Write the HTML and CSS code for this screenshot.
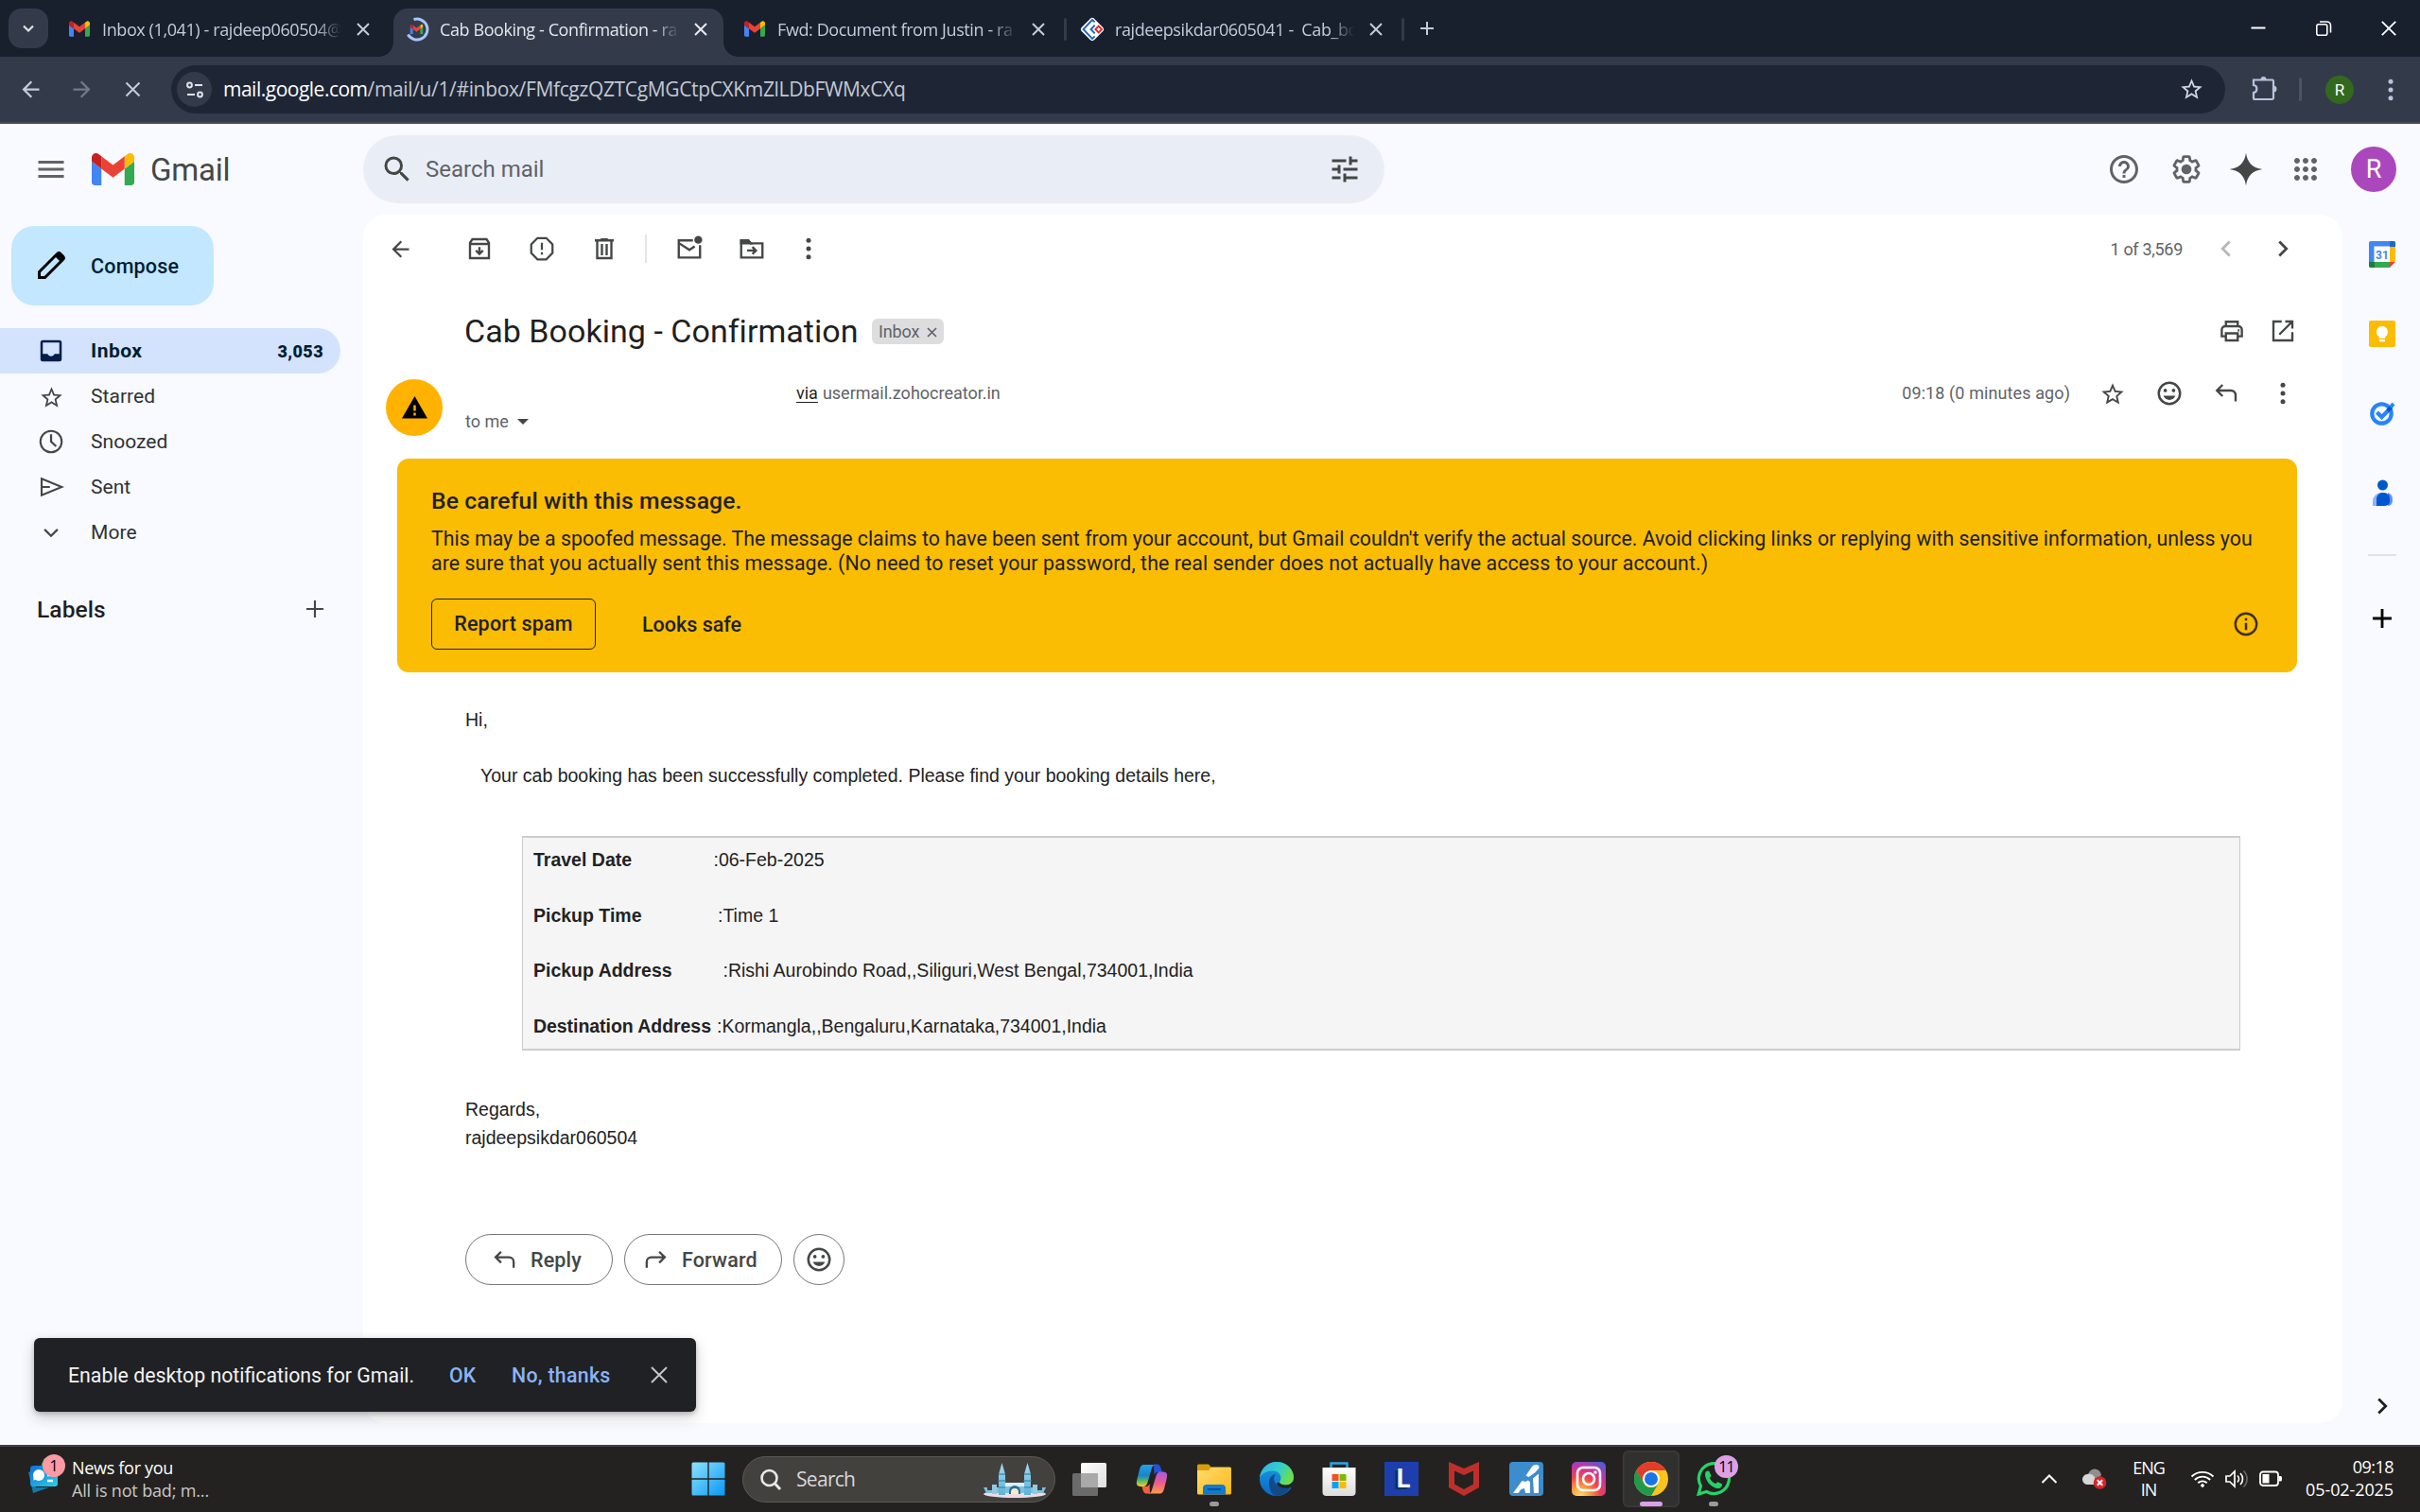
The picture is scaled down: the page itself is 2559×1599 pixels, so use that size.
FILE: index.html
```
<!DOCTYPE html>
<html lang="en">
<head>
<meta charset="utf-8">
<title>Cab Booking - Confirmation</title>
<link rel="stylesheet" href="styles.css">
</head>
<body>
<svg class="defs" aria-hidden="true">
  <defs>
    <symbol id="gmail" viewBox="52 42 88 66"><path fill="#4285f4" d="M58 108h14V74L52 59v43c0 3.32 2.69 6 6 6"/><path fill="#34a853" d="M120 108h14c3.32 0 6-2.69 6-6V59l-20 15"/><path fill="#fbbc04" d="M120 48v26l20-15v-8c0-7.42-8.47-11.65-14.4-7.2"/><path fill="#ea4335" d="M72 74V48l24 18 24-18v26L96 92"/><path fill="#c5221f" d="M52 51v8l20 15V48l-5.6-4.2c-5.94-4.45-14.4-.22-14.4 7.2"/></symbol>
    <symbol id="x" viewBox="0 0 18 18"><path d="M3 3l12 12M15 3L3 15" fill="none" stroke="currentColor" stroke-width="2"/></symbol>
    <symbol id="star" viewBox="0 0 24 24"><path fill="currentColor" d="M22 9.24l-7.19-.62L12 2 9.19 8.63 2 9.24l5.46 4.73L5.82 21 12 17.27 18.18 21l-1.63-7.03L22 9.24zM12 15.4l-3.76 2.27 1-4.28-3.32-2.88 4.38-.38L12 6.1l1.71 4.04 4.38.38-3.32 2.88 1 4.28L12 15.4z"/></symbol>
    <symbol id="dots" viewBox="0 0 24 24"><g fill="currentColor"><circle cx="12" cy="5" r="2"/><circle cx="12" cy="12" r="2"/><circle cx="12" cy="19" r="2"/></g></symbol>
    <symbol id="mood" viewBox="0 0 24 24"><circle cx="12" cy="12" r="9" fill="none" stroke="currentColor" stroke-width="2"/><g fill="currentColor"><circle cx="8.5" cy="9.5" r="1.5"/><circle cx="15.5" cy="9.5" r="1.5"/><path d="M12 17.5c2.33 0 4.31-1.46 5.11-3.5H6.89c.8 2.04 2.78 3.5 5.11 3.5z"/></g></symbol>
    <symbol id="reply" viewBox="0 0 24 24"><path fill="none" stroke="currentColor" stroke-width="1.900" d="M9 4.8L4.2 9.6 9 14.4M4.2 9.6H16a4 4 0 0 1 4 4v5.2"/></symbol>
    <symbol id="back" viewBox="0 0 24 24"><path fill="currentColor" d="M20 11H7.83l5.59-5.59L12 4l-8 8 8 8 1.41-1.41L7.83 13H20v-2z"/></symbol>
    <symbol id="left" viewBox="0 0 24 24"><path fill="none" stroke="currentColor" stroke-width="2.2" d="M15 6l-6 6 6 6"/></symbol>
    <symbol id="plus" viewBox="0 0 24 24"><path fill="none" stroke="currentColor" stroke-width="2" d="M12 5v14M5 12h14"/></symbol>
    <linearGradient id="gWin" x1="0" y1="0" x2="1" y2="1"><stop offset="0" stop-color="#8ce3ff"/><stop offset="1" stop-color="#0a97f5"/></linearGradient>
    <linearGradient id="gCopA" x1="0" y1="0" x2="0" y2="1"><stop offset="0" stop-color="#1fa2f0"/><stop offset=".5" stop-color="#1b83c8"/><stop offset=".75" stop-color="#5dbb5e"/><stop offset="1" stop-color="#ffcb2a"/></linearGradient>
    <linearGradient id="gCopB" x1="0" y1="0" x2="0" y2="1"><stop offset="0" stop-color="#a25ae8"/><stop offset=".5" stop-color="#ee5b8f"/><stop offset="1" stop-color="#ff9a45"/></linearGradient>
    <linearGradient id="gFold" x1="0" y1="0" x2="1" y2="1"><stop offset="0" stop-color="#ffdc72"/><stop offset="1" stop-color="#fdb813"/></linearGradient>
    <linearGradient id="gEdge" x1="0" y1="0" x2="1" y2=".5"><stop offset="0" stop-color="#2bb0ee"/><stop offset=".6" stop-color="#36cfc6"/><stop offset="1" stop-color="#6be04b"/></linearGradient>
    <linearGradient id="gEdgeB" x1="0" y1="0" x2="0" y2="1"><stop offset="0" stop-color="#1b9be0"/><stop offset="1" stop-color="#0a68c8"/></linearGradient>
    <linearGradient id="gStore" x1="0" y1="0" x2="0" y2="1"><stop offset="0" stop-color="#fff"/><stop offset="1" stop-color="#dcdcdc"/></linearGradient>
    <radialGradient id="gInsta" cx=".25" cy="1" r="1.15"><stop offset="0" stop-color="#ffdf6d"/><stop offset=".25" stop-color="#fd9a3c"/><stop offset=".5" stop-color="#f0434f"/><stop offset=".75" stop-color="#c633a5"/><stop offset="1" stop-color="#4d5fd6"/></radialGradient>
    <linearGradient id="gNews" x1="0" y1="0" x2="1" y2="1"><stop offset="0" stop-color="#0f6fdc"/><stop offset="1" stop-color="#2bd0e4"/></linearGradient>
    <linearGradient id="gTv" x1="0" y1="0" x2="1" y2="1"><stop offset="0" stop-color="#fff"/><stop offset="1" stop-color="#dedede"/></linearGradient>
    <linearGradient id="gCastle" x1="0" y1="0" x2="0" y2="1"><stop offset="0" stop-color="#a9d8ee"/><stop offset="1" stop-color="#5fb3d6"/></linearGradient>
  </defs>
</svg>

<div class="screen">
  <header class="tabstrip">
    <span class="tab-menu"><svg width="18" height="18" viewBox="0 0 18 18"><path d="M4 6.5l5 5 5-5" fill="none" stroke="#dfe3ea" stroke-width="2.2"/></svg></span>
    <div class="tab"><span class="fav"><svg width="22" height="17"><use href="#gmail"/></svg></span><span class="tab-title">Inbox (1,041) - rajdeep060504@</span><svg class="tab-x" width="18" height="18"><use href="#x"/></svg></div>
    <div class="tab active"><span class="fav"><svg width="26" height="26" viewBox="0 0 26 26"><path d="M9.5 2.6A11 11 0 1 1 3.4 18.6" fill="none" stroke="#a8c7fa" stroke-width="3"/><use href="#gmail" x="5.5" y="7.5" width="14" height="11"/></svg></span><span class="tab-title">Cab Booking - Confirmation - ra</span><svg class="tab-x" width="18" height="18"><use href="#x"/></svg></div>
    <div class="tab"><span class="fav"><svg width="22" height="17"><use href="#gmail"/></svg></span><span class="tab-title">Fwd: Document from Justin - ra</span><svg class="tab-x" width="18" height="18"><use href="#x"/></svg></div>
    <i class="tab-sep"></i>
    <div class="tab"><span class="fav"><svg width="26" height="26" viewBox="0 0 24 24"><rect x="3.300" y="3.300" width="17.400" height="17.400" rx="3" transform="rotate(45 12 12)" fill="#fff"/><path d="M14.500 4.800L12 2.900 3.300 12l8.700 9.100 2.500-2.300M14.500 8L10.700 12l3.800 4" fill="none" stroke="#1c69b5" stroke-width="1.800"/><rect x="16" y="9.800" width="4.400" height="4.400" transform="rotate(45 18.200 12)" fill="#fff" stroke="#e42527" stroke-width="1.700"/></svg></span><span class="tab-title">rajdeepsikdar0605041 -&nbsp; Cab_bo</span><svg class="tab-x" width="18" height="18"><use href="#x"/></svg></div>
    <i class="tab-sep"></i>
    <svg class="new-tab" width="24" height="24"><use href="#plus"/></svg>
    <div class="win-controls">
      <svg width="18" height="18" viewBox="0 0 18 18"><path d="M1.5 8.5h15" stroke="#fff" stroke-width="2"/></svg>
      <svg width="18" height="18" viewBox="0 0 18 18" fill="none" stroke="#fff" stroke-width="1.6"><rect x="1.8" y="4.8" width="11" height="11.4" rx="2"/><path d="M5 2h7.500a4 4 0 0 1 4 4v7.500"/></svg>
      <svg width="18" height="18" viewBox="0 0 18 18"><path d="M1.800 1.800l14.400 14.400M16.200 1.800L1.800 16.200" stroke="#fff" stroke-width="1.800"/></svg>
    </div>
  </header>

  <div class="toolbar">
    <svg class="nav" width="27" height="27"><use href="#back"/></svg>
    <svg class="nav dim flip" width="27" height="27"><use href="#back"/></svg>
    <svg class="nav" width="27" height="27" viewBox="0 0 27 27"><path d="M6.500 6.500l14 14M20.500 6.500l-14 14" fill="none" stroke="currentColor" stroke-width="2"/></svg>
    <div class="omnibox">
      <span class="site-info"><svg width="20" height="20" viewBox="0 0 20 20" fill="none" stroke="#dfe3ea" stroke-width="2"><circle cx="4.500" cy="5" r="2.400"/><path d="M10 5h8M2 15h8"/><circle cx="15.500" cy="15" r="2.400"/></svg></span>
      <span class="url"><span class="host">mail.google.com</span><span class="path">/mail/u/1/#inbox/FMfcgzQZTCgMGCtpCXKmZlLDbFWMxCXq</span></span>
      <svg class="bookmark" width="27" height="27"><use href="#star"/></svg>
    </div>
    <svg class="puzzle" width="30" height="30" viewBox="0 0 30 30"><path d="M4 6.500h20a1.500 1.500 0 0 1 1 1.500v17.500a1.500 1.500 0 0 1-1.500 1.500H5.500A1.500 1.500 0 0 1 4 25.500V20c4.500-.5 4.500-7.500 0-8z" fill="none" stroke="#b9c4dc" stroke-width="2.200"/><path d="M11.500 6a3 3 0 0 1 6 0zM25 12.500a3.200 3.200 0 0 1 0 7z" fill="#b9c4dc"/></svg>
    <i class="tool-sep"></i>
    <span class="profile">R</span>
    <svg class="kebab" width="30" height="30"><use href="#dots"/></svg>
  </div>

  <div class="gmail">
    <div class="ghead">
      <svg class="burger" width="36" height="36" viewBox="0 0 24 24"><path fill="#5f6368" d="M3 18h18v-2H3v2zm0-5h18v-2H3v2zm0-7v2h18V6H3z"/></svg>
      <svg class="logo" width="45" height="34"><use href="#gmail"/></svg>
      <span class="brand">Gmail</span>
      <div class="search">
        <svg width="36" height="36" viewBox="0 0 24 24"><path fill="#444746" d="M15.500 14h-.79l-.28-.27A6.471 6.471 0 0 0 16 9.500 6.500 6.500 0 1 0 9.500 16c1.610 0 3.090-.59 4.230-1.570l.27.28v.79l5 4.990L20.490 19l-4.990-5zm-6 0C7.010 14 5 11.990 5 9.500S7.010 5 9.500 5 14 7.010 14 9.500 11.990 14 9.500 14z"/></svg>
        <span class="search-text">Search mail</span>
        <svg class="tune" width="36" height="36" viewBox="0 0 24 24"><path fill="#444746" d="M3 17v2h6v-2H3zM3 5v2h10V5H3zm10 16v-2h8v-2h-8v-2h-2v6h2zM7 9v2H3v2h4v2h2V9H7zm14 4v-2H11v2h10zm-6-4h2V7h4V5h-4V3h-2v6z"/></svg>
      </div>
      <div class="ghead-right">
        <svg width="36" height="36" viewBox="0 0 24 24"><path fill="#5f6368" d="M11 18h2v-2h-2v2zm1-16C6.480 2 2 6.480 2 12s4.480 10 10 10 10-4.480 10-10S17.520 2 12 2zm0 18c-4.410 0-8-3.590-8-8s3.590-8 8-8 8 3.590 8 8-3.590 8-8 8zm0-14c-2.210 0-4 1.790-4 4h2c0-1.100.9-2 2-2s2 .9 2 2c0 2-3 1.750-3 5h2c0-2.250 3-2.500 3-5 0-2.210-1.790-4-4-4z"/></svg>
        <svg class="gear" width="36" height="36" viewBox="0 0 24 24"><g transform="translate(1.300 1.300) scale(.892)"><path fill="none" stroke="#5f6368" stroke-width="2.100" d="M19.430 12.980c.04-.32.07-.64.07-.98 0-.34-.03-.66-.07-.98l2.110-1.650c.19-.15.24-.42.12-.64l-2-3.460c-.09-.16-.26-.25-.44-.25-.06 0-.12.01-.17.03l-2.490 1c-.52-.4-1.080-.73-1.690-.98l-.38-2.650C14.460 2.180 14.250 2 14 2h-4c-.25 0-.46.18-.49.42l-.38 2.650c-.61.25-1.170.59-1.690.98l-2.490-1c-.06-.02-.12-.03-.18-.03-.17 0-.34.09-.43.25l-2 3.460c-.13.22-.07.49.12.64l2.110 1.650c-.04.32-.07.65-.07.98s.03.66.07.98l-2.110 1.650c-.19.15-.24.42-.12.64l2 3.460c.09.16.26.25.44.25.06 0 .12-.01.17-.03l2.490-1c.52.4 1.080.73 1.690.98l.38 2.650c.03.24.24.42.49.42h4c.25 0 .46-.18.49-.42l.38-2.650c.61-.25 1.170-.59 1.690-.98l2.490 1c.06.02.12.03.18.03.17 0 .34-.09.43-.25l2-3.460c.12-.22.07-.49-.12-.64l-2.110-1.650z"/><circle cx="12" cy="12" r="4" fill="#5f6368"/></g></svg>
        <svg class="spark" width="36" height="36" viewBox="0 0 36 36"><path fill="#444746" d="M18 .5C19.300 11 25 16.700 35.500 18 25 19.300 19.300 25 18 35.500 16.700 25 11 19.300.5 18 11 16.700 16.700 11 18 .5z"/></svg>
        <svg width="36" height="36" viewBox="0 0 24 24"><path fill="#5f6368" d="M6 8c1.100 0 2-.9 2-2s-.9-2-2-2-2 .9-2 2 .9 2 2 2zm6 12c1.100 0 2-.9 2-2s-.9-2-2-2-2 .9-2 2 .9 2 2 2zm-6 0c1.100 0 2-.9 2-2s-.9-2-2-2-2 .9-2 2 .9 2 2 2zm0-6c1.100 0 2-.9 2-2s-.9-2-2-2-2 .9-2 2 .9 2 2 2zm6 0c1.100 0 2-.9 2-2s-.9-2-2-2-2 .9-2 2 .9 2 2 2zm4-8c0 1.100.9 2 2 2s2-.9 2-2-.9-2-2-2-2 .9-2 2zm-4 2c1.100 0 2-.9 2-2s-.9-2-2-2-2 .9-2 2 .9 2 2 2zm6 6c1.100 0 2-.9 2-2s-.9-2-2-2-2 .9-2 2 .9 2 2 2zm0 6c1.100 0 2-.9 2-2s-.9-2-2-2-2 .9-2 2 .9 2 2 2z"/></svg>
        <span class="account">R</span>
      </div>
    </div>

    <div class="gbody">
      <nav class="side">
        <div class="compose"><svg width="36" height="36" viewBox="0 0 36 36"><path d="M5.500 30.500v-6L24.500 5.500a2.500 2.500 0 0 1 3.500 0l2.500 2.500a2.500 2.500 0 0 1 0 3.500L11.500 30.500z" fill="none" stroke="#000" stroke-width="3"/><path d="M22 8l6-3.500 4 4L28 14z" fill="#000"/></svg><span>Compose</span></div>
        <div class="folder sel"><svg width="30" height="30" viewBox="0 0 24 24"><path fill="#041e49" fill-rule="evenodd" d="M5 3h14a2 2 0 0 1 2 2v14a2 2 0 0 1-2 2H5a2 2 0 0 1-2-2V5a2 2 0 0 1 2-2zm0 2v9.500h4c.6 1.200 1.700 2 3 2s2.400-.8 3-2h4V5z"/></svg><span>Inbox</span><b>3,053</b></div>
        <div class="folder"><svg width="27" height="27" class="f27"><use href="#star"/></svg><span>Starred</span></div>
        <div class="folder"><svg width="30" height="30" viewBox="0 0 24 24" fill="none" stroke="#444746"><circle cx="12" cy="12" r="9" stroke-width="1.700"/><path d="M12 5.800V12l4.300 4" stroke-width="1.800"/></svg><span>Snoozed</span></div>
        <div class="folder"><svg width="30" height="30" viewBox="0 0 24 24"><path fill="none" stroke="#444746" stroke-width="1.700" d="M4 5l17 7-17 7zM4 12h7"/></svg><span>Sent</span></div>
        <div class="folder"><svg width="30" height="30" viewBox="0 0 24 24"><path fill="none" stroke="#444746" stroke-width="1.800" d="M6.500 9.500L12 15l5.500-5.500"/></svg><span>More</span></div>
        <div class="labels"><span>Labels</span><svg width="30" height="30" viewBox="0 0 24 24"><path stroke="#444746" stroke-width="1.700" d="M12 4.800v14.400M4.800 12h14.400"/></svg></div>
      </nav>

      <main class="card">
        <div class="actions">
          <svg class="a-back" width="27" height="27"><use href="#back"/></svg>
          <svg width="30" height="30" viewBox="0 0 24 24" fill="none" stroke="currentColor" stroke-width="1.900"><path d="M4 7l2-3h12l2 3v13H4zM4 8h16M12 10.500V16M9 13.500l3 3 3-3"/></svg>
          <svg class="m36" width="30" height="30" viewBox="0 0 24 24" fill="none" stroke="currentColor" stroke-width="1.800"><path d="M8.300 3h7.400L21 8.300v7.400L15.700 21H8.300L3 15.700V8.300zM12 7v6M12 15v2"/></svg>
          <svg class="m36" width="30" height="30" viewBox="0 0 24 24" fill="none" stroke="currentColor" stroke-width="1.900"><path d="M4 5h16M9 4.200h6M6 5v15h12V5M10 8v9.500M14 8v9.500"/></svg>
          <i class="a-sep"></i>
          <svg width="30" height="30" viewBox="0 0 24 24" fill="none" stroke="currentColor" stroke-width="1.900"><path d="M15 5H3v14.500h18V9M3.500 7.500L12 13l4.500-3"/><circle cx="19.500" cy="4.500" r="2.400" fill="currentColor"/></svg>
          <svg class="m36" width="30" height="30" viewBox="0 0 24 24" fill="none" stroke="currentColor" stroke-width="1.900"><path d="M3 19.500V5h6l2 2.500h10v12zM8 13.500h7M12.500 10.500l3 3-3 3"/><path d="M3 5h6l2 2.500H3z" fill="currentColor"/></svg>
          <svg class="a-dots" width="30" height="30"><use href="#dots"/></svg>
          <span class="pager">1 of 3,569</span>
          <svg class="p-left" width="30" height="30"><use href="#left"/></svg>
          <svg class="p-right flip" width="30" height="30"><use href="#left"/></svg>
        </div>

        <div class="subject">
          <h1>Cab Booking - Confirmation</h1>
          <span class="chip"><span>Inbox</span><svg width="11" height="11" viewBox="0 0 11 11"><path d="M1 1l9 9M10 1L1 10" stroke="#5f6368" stroke-width="1.700"/></svg></span>
          <svg class="print" width="30" height="30" viewBox="0 0 24 24" fill="none" stroke="currentColor" stroke-width="1.900"><path d="M7 8V4.200h10V8M7 16.500H3.500V11a3 3 0 0 1 3-3h11a3 3 0 0 1 3 3v5.500H17M7 14h10v6H7z"/><path d="M17 11.500h1.500"/></svg>
          <svg width="30" height="30" viewBox="0 0 24 24" fill="none" stroke="currentColor" stroke-width="1.900"><path d="M11 4H4v16h16v-7M14 4h6v6M20 4L9 15"/></svg>
        </div>

        <div class="meta">
          <span class="warn-avatar"><svg width="27" height="24" viewBox="0 0 27 24"><path d="M13.500 0L27 23.500H0z" fill="#000"/><path d="M13.500 9.500v6M13.500 17.500v3" stroke="#ffb300" stroke-width="2.400"/></svg></span>
          <div class="who">
            <div class="via"><u>via</u><span>usermail.zohocreator.in</span></div>
            <div class="tome"><span>to me</span><svg width="12" height="6" viewBox="0 0 12 6"><path d="M0 0h12L6 6z" fill="#444746"/></svg></div>
          </div>
          <div class="meta-right">
            <span class="time">09:18 (0 minutes ago)</span>
            <svg class="m-star" width="28" height="28"><use href="#star"/></svg>
            <svg class="m-ic" width="30" height="30"><use href="#mood"/></svg>
            <svg class="m-ic" width="30" height="30"><use href="#reply"/></svg>
            <svg class="m-ic" width="30" height="30"><use href="#dots"/></svg>
          </div>
        </div>

        <section class="warning">
          <h2>Be careful with this message.</h2>
          <p><span class="l1">This may be a spoofed message. The message claims to have been sent from your account, but Gmail couldn't verify the actual source. Avoid clicking links or replying with sensitive information, unless you</span><br><span class="l2">are sure that you actually sent this message. (No need to reset your password, the real sender does not actually have access to your account.)</span></p>
          <div class="warn-actions">
            <span class="btn-out">Report spam</span><span class="btn-txt">Looks safe</span>
            <svg class="info" width="30" height="30" viewBox="0 0 24 24"><circle cx="12" cy="12" r="9" fill="none" stroke="#3b2f0a" stroke-width="1.900"/><path d="M12 11v6M12 7v2" stroke="#3b2f0a" stroke-width="2"/></svg>
          </div>
        </section>

        <article class="mail">
          <p>Hi,</p>
          <p class="intro">Your cab booking has been successfully completed. Please find your booking details here,</p>
          <div class="booking">
            <div><b class="k1">Travel Date</b>:06-Feb-2025</div>
            <div><b class="k2">Pickup Time</b>:Time 1</div>
            <div><b class="k3">Pickup Address</b>:Rishi Aurobindo Road,,Siliguri,West Bengal,734001,India</div>
            <div><b class="k4">Destination Address</b>:Kormangla,,Bengaluru,Karnataka,734001,India</div>
          </div>
          <p>Regards,<br>rajdeepsikdar060504</p>
        </article>

        <div class="replybar">
          <span class="pill reply"><svg width="29" height="29"><use href="#reply"/></svg><span>Reply</span></span>
          <span class="pill fwd"><svg class="flip" width="29" height="29"><use href="#reply"/></svg><span>Forward</span></span>
          <span class="pill round"><svg width="30" height="30"><use href="#mood"/></svg></span>
        </div>
      </main>

      <aside class="addons">
        <svg width="28" height="28" viewBox="0 0 28 28"><rect width="28" height="28" rx="2" fill="#4285f4"/><path d="M22 0h4a2 2 0 0 1 2 2v4h-6z" fill="#1967d2"/><path d="M22 6h6v16h-6z" fill="#fbbc04"/><path d="M6 22h16v6H6z" fill="#34a853"/><path d="M0 22h6v6H2a2 2 0 0 1-2-2z" fill="#188038"/><path d="M22 22h6l-6 6z" fill="#ea4335"/><path d="M28 22v6h-6z" fill="#f8fafd"/><rect x="5.500" y="5.500" width="16.500" height="16.500" fill="#fff"/><text x="14" y="18.500" text-anchor="middle" class="cal-day">31</text></svg>
        <svg width="28" height="28" viewBox="0 0 28 28"><rect width="28" height="28" rx="2" fill="#fbbc04"/><path d="M14 6a6 6 0 0 0-3.300 11v1.800h6.600V17A6 6 0 0 0 14 6zM11 20h6v2.200h-6z" fill="#fff"/></svg>
        <svg width="28" height="28" viewBox="0 0 28 28"><circle cx="13.500" cy="14.500" r="10.200" fill="none" stroke="#2684fc" stroke-width="4.200"/><path d="M7 14.500l3-3 3.500 3.500L22.500 6l3 3L13.500 21z" fill="#2684fc"/><path d="M18.500 10l6-7.500 3 3-6.500 7z" fill="#2684fc"/><path d="M18.500 10l3-3.500 3 3-3.500 3.200z" fill="#0057cc"/></svg>
        <svg width="28" height="28" viewBox="0 0 28 28"><path d="M4 28v-5a9 9 0 0 1 9-9v14z" fill="#8ab4ff"/><path d="M20 14a8 8 0 0 1 5 8c0 3-2 6-5 6z" fill="#5c8dff"/><path d="M8 28v-8a6.500 6.500 0 0 1 6-6h2a6 6 0 0 1 6 6v3a5 5 0 0 1-5 5z" fill="#0057cc"/><circle cx="14.500" cy="6" r="5.500" fill="#0057cc"/></svg>
        <i class="side-sep"></i>
        <svg class="add" width="34" height="34"><use href="#plus"/></svg>
        <svg class="flip collapse" width="30" height="30"><use href="#left"/></svg>
      </aside>
    </div>
  </div>

  <footer class="taskbar">
    <div class="news">
      <span class="news-ic"><svg width="36" height="38" viewBox="0 0 36 38"><path d="M15 6l3-6h10v12H14z" fill="#3fa65a"/><path d="M1 15l4-2 4 18 14 0-17 6z" fill="#137aa8"/><rect x="3" y="8" width="29" height="22" rx="3" fill="url(#gNews)"/><circle cx="12" cy="18" r="6" fill="#fff"/><path d="M6.500 24v-5h5z" fill="#fff"/><path d="M21 18h9M21 24h6" stroke="#fff" stroke-width="2.400"/></svg><em>1</em></span>
      <div class="news-text"><span class="n1">News for you</span><span class="n2">All is not bad; m...</span></div>
    </div>
    <div class="apps">
      <span class="app"><svg width="36" height="36" viewBox="0 0 36 36"><path fill="url(#gWin)" d="M2 .5h15.300v16.800H.5V2A1.500 1.500 0 0 1 2 .5zM18.700.5H34A1.500 1.500 0 0 1 35.500 2v15.300H18.700zM.5 18.700h16.800v16.800H2A1.500 1.500 0 0 1 .5 34zM18.700 18.700h16.800V34a1.500 1.500 0 0 1-1.500 1.500H18.700z"/></svg></span>
      <div class="tsearch">
        <svg width="24" height="24" viewBox="0 0 24 24" fill="none" stroke="#e8e8e8"><circle cx="10.500" cy="10" r="8" stroke-width="2.600"/><path d="M16.500 16l5.500 6" stroke-width="3"/></svg>
        <span>Search</span>
        <svg class="castle" width="68" height="38" viewBox="0 0 68 38"><ellipse cx="34" cy="34" rx="33" ry="4" fill="#eedbe4"/><path d="M1 27h4v3h5v-3h14v-5h20v5h14v3h5v-3h4l-3 6H4z" fill="#7fc0dc"/><path d="M17 35V13l3.500-12L24 13v22zM44 35V13l3.500-12L51 13v22z" fill="url(#gCastle)"/><path d="M24 22h20v4H24z" fill="#d9eefa"/><path d="M17 13h7M16.500 20h8M44 13h7M43.500 20h8M17 27h7M44 27h7" stroke="#3f93bb" stroke-width="1.500"/><path d="M28 34v-3a6 6 0 0 1 12 0v3z" fill="#2e6f92"/><path d="M30 34v-2a4 4 0 0 1 8 0v2z" fill="#f6ead0"/><path d="M10 24h5v10h-5zM53 24h5v10h-5z" fill="#8fcbe3"/></svg>
      </div>
      <span class="app"><svg width="36" height="36" viewBox="0 0 36 36"><rect x="0" y="12" width="27" height="24" rx="1.500" fill="#6b6b6b"/><rect x="9" y="1" width="27" height="26" rx="1.500" fill="url(#gTv)"/><path d="M9 12h18v15H9z" fill="#a9a9a9"/></svg></span>
      <span class="app"><svg width="36" height="36" viewBox="0 0 36 36"><path d="M20 2.500h3.500c3 0 3.600 2.500 4.500 5.500l1 3h-5c-2 0-3 1.500-3.500 3z" fill="#2453d8"/><path d="M10 3h12c-3 0-3.800 3-4.700 6l-3.600 12c-1 3.500-2 5-5 5H6c-5 0-4.500-4-3.500-8L5 8c1-3.500 2-5 5-5z" fill="url(#gCopA)"/><path d="M16 33.500h-3.500c-3 0-3.600-2.500-4.500-5.500l-.6-2h4.600c2 0 3-1.500 3.500-3z" fill="#f2603e"/><path d="M26 33.500H14c3 0 3.800-3 4.700-6l3.600-12c1-3.500 2-5 5-5H30c5 0 4.500 4 3.500 8l-2.500 10c-1 3.500-2 5-5 5z" fill="url(#gCopB)"/></svg></span>
      <span class="app run"><svg width="36" height="36" viewBox="0 0 36 36"><path d="M0 4a1.500 1.500 0 0 1 1.500-1.500H12L15 6v5H0z" fill="#dd9d0b"/><path d="M0 9h12l3-3.500h19.500A1.500 1.500 0 0 1 36 7v26a1.500 1.500 0 0 1-1.500 1.500h-33A1.500 1.500 0 0 1 0 33z" fill="url(#gFold)"/><path d="M6 34.500V28a4 4 0 0 1 4-4h16a4 4 0 0 1 4 4v6.500z" fill="#0f7bd0"/><path d="M11 29h14" stroke="#0a4f95" stroke-width="2"/></svg><i class="dot"></i></span>
      <span class="app"><svg width="36" height="36" viewBox="0 0 36 36"><circle cx="18" cy="18" r="18" fill="url(#gEdgeB)"/><path d="M0 17C1 7 9 0 18 0c10 0 18 7.500 18 16 0 5-4 8.500-8.500 8.500-4 0-6.500-1.500-6.500-3 0-1 1.500-2 1.500-4.500C22.500 13 19 9.500 14 9.500 7 9.500 1.500 13 0 17z" fill="url(#gEdge)"/><path d="M10 22c0-4 2-8 7-9-2 2.500-2.500 5.500-1 8.500 2.500 5 9.500 7 17 4.500-3 6.500-9 10-15 10-5 0-8-7-8-14z" fill="#114a8b"/><path d="M20.500 21.500c1 2 4 3 7 3 4 0 7-2 8.500-5v8l-3.500-.5c-6 2-12 .5-15-4z" fill="#242321"/></svg></span>
      <span class="app"><svg width="36" height="38" viewBox="0 0 36 38"><path d="M9.500 8V2.500h17V8" fill="none" stroke="#2aa7ea" stroke-width="2.400"/><path d="M.5 7h35v26a4 4 0 0 1-4 4h-27a4 4 0 0 1-4-4z" fill="url(#gStore)"/><path d="M10.500 14h7v7h-7z" fill="#f25022"/><path d="M18.500 14h7v7h-7z" fill="#7fba00"/><path d="M10.500 22h7v7h-7z" fill="#00a4ef"/><path d="M18.500 22h7v7h-7z" fill="#ffb900"/></svg></span>
      <span class="app"><span class="l-app">L</span></span>
      <span class="app"><svg width="32" height="36" viewBox="0 0 32 36"><path d="M0 0l16 7L32 0v27l-16 9-16-9zM6 9.500v14L16 29l10-5.500v-14L16 14z" fill="#be2f2c" fill-rule="evenodd"/></svg></span>
      <span class="app"><svg width="36" height="36" viewBox="0 0 36 36"><rect width="36" height="36" rx="4" fill="#3d8ccc"/><path d="M4 33L13.500 20l3.500 1 3-1.500 2 2V33h-5l-1-5-3.500 1-3 4zM17.500 14.500L24 5c2-3 8.500-3 7.500 1.500L27 11.500 20.500 16zM25 17.500l6-5V33h-5z" fill="#fff"/></svg></span>
      <span class="app"><svg width="36" height="36" viewBox="0 0 36 36"><rect width="36" height="36" rx="5" fill="url(#gInsta)"/><g fill="none" stroke="#fff" stroke-width="2.600"><rect x="6" y="6" width="24" height="24" rx="6"/><circle cx="18" cy="18" r="6"/></g><circle cx="25" cy="11" r="1.700" fill="#fff"/></svg></span>
      <span class="app cur"><svg width="36" height="36" viewBox="0 0 36 36"><circle cx="18" cy="18" r="18" fill="#fcc31e"/><path d="M2.400 9A18 18 0 0 0 18 36l7.800-13.500A9 9 0 0 1 10.200 22.500z" fill="#229a49"/><path d="M18 9h15.600A18 18 0 0 0 2.400 9l7.800 13.500A9 9 0 0 1 18 9z" fill="#e33b2e"/><path d="M2.400 9A18 18 0 0 0 3 28l8-4-.8-1.500z" fill="#229a49"/><circle cx="18" cy="18" r="8.800" fill="#fff"/><circle cx="18" cy="18" r="7" fill="#1a73e8"/></svg><i class="bar"></i></span>
      <span class="app run"><svg width="36" height="36" viewBox="0 0 36 36"><path d="M2.200 34l2.300-8.500A16 16 0 1 1 10.500 31.500z" fill="none" stroke="#25d366" stroke-width="3.200"/><path d="M9.500 11c1-1.800 3.500-2 4.200-.5l1.600 3.700c.4 1-1.700 2.500-1.300 3.300 1.500 2.500 3.200 4.200 6 5.500.8.300 2-2 3-1.600l3.700 1.800c1 .6 0 3.300-1.700 4.200-3 1.600-7.500-.2-11-3.600S8 14 9.500 11z" fill="#25d366"/></svg><em>11</em><i class="dot"></i></span>
    </div>
    <div class="tray">
      <svg class="t-up" width="18" height="18" viewBox="0 0 18 18"><path d="M1.500 13L9 5.500l7.500 7.500" fill="none" stroke="#fff" stroke-width="2"/></svg>
      <svg class="t-cloud" width="26" height="22" viewBox="0 0 26 22"><path d="M6 8a7 7 0 0 1 14-1l-8 9H5z" fill="#8f8f8f"/><path d="M6 17a5.500 5.500 0 0 1-1-11c3-1 6 0 8 3v8z" fill="#d6d6d6"/><circle cx="18.500" cy="15" r="6.800" fill="#d8232a"/><path d="M15.800 12.300l5.400 5.400M21.200 12.300l-5.400 5.400" stroke="#fff" stroke-width="2"/></svg>
      <div class="lang"><span>ENG</span><span>IN</span></div>
      <svg class="t-wifi" width="26" height="20" viewBox="0 0 26 20" fill="none" stroke="#fff" stroke-width="1.900"><path d="M1.500 7.500a16.500 16.500 0 0 1 23 0M4.800 11a11.700 11.700 0 0 1 16.400 0M8.300 14.300a6.700 6.700 0 0 1 9.400 0"/><circle cx="13" cy="17" r="1.400" fill="#fff" stroke-width="1"/></svg>
      <svg class="t-vol" width="28" height="20" viewBox="0 0 28 20" fill="none" stroke="#fff" stroke-width="1.700"><path d="M2 7h4l5-5v16l-5-5H2z"/><path d="M14 6.500a5 5 0 0 1 0 7M17 4a8.500 8.500 0 0 1 0 12"/><path d="M20.500 1.500a12 12 0 0 1 0 17" stroke="#666"/></svg>
      <svg class="t-bat" width="26" height="18" viewBox="0 0 26 18"><rect x="2" y="1.500" width="19" height="14.500" rx="3" fill="none" stroke="#fff" stroke-width="1.800"/><rect x="4.500" y="4" width="7" height="9.500" fill="#fff"/><path d="M22 6h1.500a1.500 1.500 0 0 1 1.500 1.500v2.500a1.500 1.500 0 0 1-1.500 1.500H22z" fill="#fff"/></svg>
      <div class="clock"><span class="hm">09:18</span><span>05-02-2025</span></div>
    </div>
  </footer>

  <div class="toast">
    <span class="msg">Enable desktop notifications for Gmail.</span><a class="ok">OK</a><a class="no">No, thanks</a>
    <svg width="20" height="20" viewBox="0 0 20 20"><path d="M2 2l16 16M18 2L2 18" stroke="#c4c7c5" stroke-width="2"/></svg>
  </div>
</div>
</body>
</html>
```
FILE: styles.css
```
* { box-sizing: border-box; }
html, body { margin: 0; height: 100%; overflow: hidden; }
body { font-family: Roboto, "Liberation Sans", sans-serif; color: #202124; }
svg { display: block; flex: none; }
.defs { position: absolute; width: 0; height: 0; }
h1, h2, p { margin: 0; font-weight: 400; }
em, i { font-style: normal; }
span, b, a { white-space: nowrap; }
.flip { transform: scaleX(-1); }
.screen { position: relative; width: 2559px; height: 1599px; display: flex; flex-direction: column; }

/* tab strip */
.tabstrip, .toolbar, .taskbar { font-family: "Open Sans", "Noto Sans", sans-serif; }
.tabstrip { height: 60px; background: #18202e; display: flex; padding-left: 9px; color: #c3cbdc; }
.tab-menu { width: 42px; height: 42px; margin: 9px 8px 0 0; border-radius: 14px; background: #333b4b; display: grid; place-items: center; }
.tab { position: relative; width: 349px; height: 51px; margin: 9px 8px 0 0; padding: 0 15px 8px 11px; display: flex; align-items: center; border-radius: 15px 15px 0 0; }
.fav { width: 28px; height: 26px; display: grid; place-items: center; margin-right: 10px; }
.tab-title { width: 253px; font-size: 18px; letter-spacing: -.4px; line-height: 28px; padding-top: 1px; -webkit-mask-image: linear-gradient(90deg, #000 226px, transparent 253px); mask-image: linear-gradient(90deg, #000 226px, transparent 253px); }
.tab-x { margin-left: 14px; color: #c3cbdc; }
.active { background: #333b4b; color: #e4e7ee; }
.active .tab-x { color: #e8eaf0; }
.active::before, .active::after { content: ""; position: absolute; bottom: 0; width: 15px; height: 15px; }
.active::before { left: -15px; background: radial-gradient(circle at 0 0, #18202e 14.5px, #333b4b 15px); }
.active::after { right: -15px; background: radial-gradient(circle at 100% 0, #18202e 14.5px, #333b4b 15px); }
.tab-sep { width: 3px; height: 24px; margin: 19px 5px 0 -5px; background: #333b4b; border-radius: 2px; }
.tab-sep + .tab { margin-left: -3px; }
.new-tab { margin: 18px 0 0 7px; color: #c3cbdc; }
.win-controls { margin: 21px 24px 0 auto; display: flex; gap: 51px; }

/* address bar */
.toolbar { height: 71px; background: #333b4b; border-bottom: 2px solid #454c5b; display: flex; align-items: flex-start; padding: 9px 16px 0 19px; }
.nav { margin: 12px 27px 0 0; color: #c3cbdc; }
.nav.dim { color: #727988; }
.omnibox { width: 2172px; height: 51px; background: #1e2636; border-radius: 26px; display: flex; align-items: center; padding-left: 6px; }
.site-info { width: 37px; height: 37px; border-radius: 50%; background: #333b4b; display: grid; place-items: center; }
.url { margin-left: 12px; font-size: 21px; line-height: 30px; padding-bottom: 1px; }
.host { color: #fff; letter-spacing: -.5px; }
.path { color: #c3c8d2; letter-spacing: -.35px; }
.bookmark { margin: 0 22px 0 auto; color: #d0d6e2; }
.puzzle { margin: 9px 0 0 26px; }
.tool-sep { width: 3px; height: 25px; margin: 13px 25px 0 22px; background: #4b5365; border-radius: 2px; }
.profile { width: 30px; height: 30px; margin-top: 11px; border-radius: 50%; background: #33691e; color: #fff; font: 400 17px/30px Roboto, sans-serif; text-align: center; }
.kebab { margin: 11px 0 0 24px; color: #b9c4dc; }

/* gmail shell */
.gmail { height: 1397px; background: #f8faff; }
.ghead { height: 96px; display: flex; align-items: center; padding-left: 36px; }
.logo { margin-left: 25px; }
.brand { width: 225px; margin-left: 17px; font-size: 33px; letter-spacing: -.2px; color: #444746; line-height: 40px; padding-top: 2px; }
.search { width: 1080px; height: 72px; border-radius: 36px; background: #e9eef6; display: flex; align-items: center; padding: 0 24px 0 18px; }
.search-text { margin-left: 12px; font-size: 24px; color: #5f6368; }
.tune { margin-left: auto; }
.ghead-right { margin-left: auto; padding-right: 25px; display: flex; align-items: center; gap: 27px; }
.gear { margin-left: 3px; }
.account { width: 48px; height: 48px; margin-left: 3px; border-radius: 50%; background: #ab47bc; color: #fff; font-size: 27px; line-height: 49px; text-align: center; }
.gbody { display: grid; grid-template-columns: 384px 2093px 82px; height: 1301px; }

/* left navigation */
.side { padding-top: 12px; font-size: 21px; }
.compose { width: 214px; height: 84px; margin: 0 0 24px 12px; border-radius: 24px; background: #c2e7ff; display: flex; align-items: center; padding-left: 24px; gap: 24px; color: #001d35; font-size: 21.500px; font-weight: 500; letter-spacing: .2px; }
.folder { width: 360px; height: 48px; display: flex; align-items: center; padding: 0 18px 0 39px; color: #303134; letter-spacing: .05px; }
.folder span { margin-left: 27px; padding-bottom: 1px; }
.folder .f27 { margin: 2px 1px 0 2px; color: #444746; }
.folder.sel { background: #d3e3fd; border-radius: 0 24px 24px 0; color: #001d35; font-weight: 700; letter-spacing: .5px; }
.folder b { margin-left: auto; font-size: 18px; letter-spacing: .4px; }
.labels { margin-top: 33px; height: 48px; width: 360px; padding: 0 12px 0 39px; display: flex; align-items: center; justify-content: space-between; font-size: 24.500px; font-weight: 500; letter-spacing: .1px; color: #1f1f1f; }

/* message card */
.card { height: 1278px; background: #fff; border-radius: 24px; display: flex; flex-direction: column; color: #444746; }
.actions { height: 72px; display: flex; align-items: center; padding-left: 26px; }
.a-back { margin-right: 55px; }
.m36 { margin-left: 36px; }
.a-sep { width: 2px; height: 30px; background: #e3e5e8; margin: 0 30px 0 28px; }
.a-dots { margin-left: 30px; }
.pager { margin-left: auto; font-size: 18px; letter-spacing: -.3px; color: #5f6368; }
.p-left { margin-left: 31px; color: #b5b7b8; }
.p-right { margin: 0 48px 0 30px; }
.subject { height: 102px; padding-left: 107px; display: flex; align-items: center; }
.subject h1 { font-size: 34px; line-height: 42px; letter-spacing: .04px; width: 431px; white-space: nowrap; color: #1f1f1f; }
.chip { width: 76px; height: 27px; border-radius: 6px; background: #ddd; display: flex; align-items: center; gap: 8px; padding-left: 7px; font-size: 18px; letter-spacing: -.15px; color: #5f6368; }
.chip svg { margin-top: 3px; }
.print { margin: 0 24px 0 auto; }
.subject svg:last-child { margin-right: 48px; }
.meta { height: 84px; padding-left: 24px; display: flex; align-items: flex-start; font-size: 18px; color: #5f6368; }
.warn-avatar { width: 60px; height: 60px; border-radius: 50%; background: #ffb300; display: grid; place-items: center; }
.warn-avatar svg { margin-bottom: 1px; }
.who { margin-left: 24px; line-height: 30px; }
.via { padding-left: 350px; display: flex; gap: 5px; }
.via u { color: #1f1f1f; text-underline-offset: 3px; }
.tome { display: flex; align-items: center; gap: 9px; }
.meta-right { margin-left: auto; display: flex; align-items: center; height: 30px; padding-right: 48px; color: #444746; }
.time { color: #5f6368; letter-spacing: .1px; padding-bottom: 1px; }
.m-star { margin: 1px 0 0 31px; }
.m-ic { margin-left: 30px; }
.m-star + .m-ic { margin-left: 31px; }

.warning { width: 2009px; height: 226px; margin-left: 36px; padding: 27px 36px 0; border-radius: 12px; background: #fbbc04; color: #202124; }
.warning h2 { font-size: 24.700px; font-weight: 500; line-height: 36px; letter-spacing: .12px; }
.warning p { margin-top: 9px; font-size: 21.330px; line-height: 26px; }
.l2 { letter-spacing: .075px; }
.warn-actions { margin-top: 24px; display: flex; align-items: center; font-size: 21.500px; font-weight: 500; }
.btn-out { width: 174px; height: 54px; border: 1.500px solid #202124; border-radius: 6px; text-align: center; line-height: 51px; letter-spacing: .2px; }
.btn-txt { margin-left: 49px; }
.info { margin: 0 3px 0 auto; }

.mail { padding: 36px 106px 0 108px; font: 19.5px/29.25px "Liberation Sans", Arial, sans-serif; color: #222; height: 594px; }
.intro { margin-top: 29.25px; padding-left: 16px; }
.booking { width: 1817px; height: 227px; margin: 49px 0 48.500px 60px; padding: 9.500px 0 0 11px; border: 1px solid #ccc; border-width: 2px 1px; background: #f5f5f5; }
.booking div { height: 58.500px; }
.booking b { display: inline-block; }
.k1 { width: 190.500px; } .k2 { width: 195px; } .k3 { width: 200.500px; } .k4 { width: 194px; letter-spacing: -.05px; }
.replybar { display: flex; gap: 12px; padding-left: 108px; font-size: 21.500px; font-weight: 500; }
.pill { height: 54px; border: 1.500px solid #747775; border-radius: 27px; display: flex; align-items: center; gap: 13px; padding-left: 26px; letter-spacing: .15px; }
.reply { width: 156px; }
.fwd { width: 167px; padding-left: 18px; }
.round { width: 54px; padding-left: 11px; }

/* add-on rail */
.addons { height: 1278px; display: flex; flex-direction: column; align-items: center; padding: 28px 0 3px 2px; gap: 56px; }
.cal-day { font: 700 12px Roboto, sans-serif; fill: #4285f4; }
.side-sep { width: 30px; height: 2px; background: #dfe1e5; margin-top: -5px; }
.add { color: #000; margin-top: -7px; }
.collapse { margin-top: auto; color: #1f1f1f; }

/* taskbar */
.taskbar { height: 71px; background: #232220; border-top: 2px solid #424242; display: grid; grid-template-columns: 719px 1fr auto; color: #fff; font-size: 18px; }
.news { display: flex; padding: 12px 0 0 29px; }
.news-ic { position: relative; width: 36px; }
.news-ic em { position: absolute; left: 16px; top: -4px; width: 24px; height: 24px; border-radius: 50%; background: #ff99a4; color: #000; font-size: 16px; line-height: 24px; text-align: center; }
.news-text { margin: -2px 0 0 11px; display: flex; flex-direction: column; line-height: 24px; }
.n1 { letter-spacing: -.3px; }
.n2 { letter-spacing: -.16px; color: #c8c8c8; }
.apps { display: flex; gap: 6px; padding-top: 4px; align-items: flex-start; }
.app { position: relative; width: 60px; height: 60px; display: grid; place-items: center; border-radius: 6px; }
.app.cur { background: #30302e; box-shadow: inset 0 0 0 1.500px #3b3b39; }
.tsearch { width: 331px; height: 49px; margin-top: 6px; border-radius: 25px; background: #43413e; border: 1.500px solid #5c5a57; display: flex; align-items: center; padding: 0 8px 0 17px; font-size: 21px; letter-spacing: -.7px; color: #d8d8d8; }
.tsearch span { margin: 0 0 1px 15px; }
.castle { margin-left: auto; }
.app .dot, .app .bar { position: absolute; bottom: 1px; left: 25px; width: 10px; height: 5px; border-radius: 3px; background: #9b9b9b; }
.app .bar { left: 18px; width: 24px; background: #dda0e6; }
.app em { position: absolute; left: 31px; top: 5px; width: 25px; height: 24px; border-radius: 12px; background: #dda0e6; color: #000; font-size: 16px; line-height: 24px; text-align: center; letter-spacing: -1px; }
.l-app { width: 36px; height: 36px; background: #1d3fae; color: #fff; font: 700 27px/36px Roboto, sans-serif; text-align: center; padding-left: 4px; text-shadow: -3px 2px 0 #12305a; }
.tray { display: flex; padding-right: 28px; height: 69px; align-items: center; }
.tray div { display: flex; flex-direction: column; line-height: 24px; padding-bottom: 5px; }
.tray svg { margin-bottom: 1px; }
.t-cloud { margin-left: 26px; }
.tray .lang { width: 36px; margin-left: 26px; align-items: center; letter-spacing: -1.100px; padding-bottom: 2px; line-height: 23px; }
.t-wifi { margin-left: 26px; }
.t-vol { margin-left: 10px; }
.t-bat { margin-left: 8px; }
.tray .clock { width: 93px; margin-left: 24px; text-align: right; letter-spacing: -.1px; padding-bottom: 4px; }
.clock .hm { letter-spacing: -.55px; }

/* notification prompt */
.toast { position: absolute; left: 36px; top: 1415px; width: 700px; height: 78px; background: #202124; border-radius: 6px; display: flex; align-items: center; padding-left: 36px; font-size: 21.300px; box-shadow: 0 6px 16px rgba(0,0,0,.18), 0 2px 5px rgba(0,0,0,.22); }
.msg { width: 403px; color: #f2f2f2; }
.toast a { color: #8ab4f8; font-weight: 500; }
.ok { width: 66px; }
.no { width: 146px; letter-spacing: .3px; }
```
